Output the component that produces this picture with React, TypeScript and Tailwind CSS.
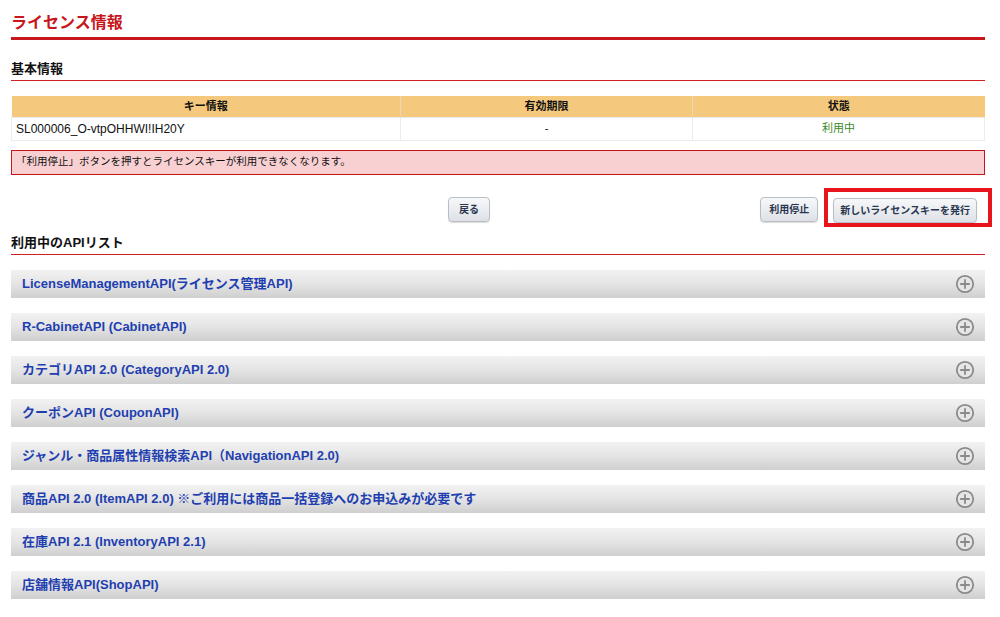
const apis = [
  'LicenseManagementAPI(ライセンス管理API)',
  'R-CabinetAPI (CabinetAPI)',
  'カテゴリAPI 2.0 (CategoryAPI 2.0)',
  'クーポンAPI (CouponAPI)',
  'ジャンル・商品属性情報検索API（NavigationAPI 2.0)',
  '商品API 2.0 (ItemAPI 2.0) ※ご利用には商品一括登録へのお申込みが必要です',
  '在庫API 2.1 (InventoryAPI 2.1)',
  '店舗情報API(ShopAPI)',
]

const PlusCircle = () => (
  <svg width="20" height="20" viewBox="0 0 20 20" fill="none">
    <circle cx="10" cy="10" r="8.2" stroke="#8a8a8a" strokeWidth="1.8" fill="#e6e6e6" />
    <path d="M10 5.2v9.6M5.2 10h9.6" stroke="#8a8a8a" strokeWidth="1.8" />
  </svg>
)

const Btn = ({ children, px = 'px-[10px]' }: { children: React.ReactNode; px?: string }) => (
  <button
    className={`h-[25px] rounded-[4px] border border-[#b9bec6] bg-gradient-to-b from-[#f7f8fa] to-[#dde1e6] ${px} text-[10px] font-bold text-[#2a3550] shadow-[0_1px_1px_rgba(0,0,0,0.15)]`}
  >
    {children}
  </button>
)

export default function App() {
  return (
    <div
      className="min-h-[617px] w-full bg-white pl-[11px] pr-[15px] text-[#111]"
      style={{ fontFamily: '"Liberation Sans", "Noto Sans CJK JP", sans-serif' }}
    >
      <h1 className="border-b-[3px] border-[#c8161d] pt-[12px] pb-[3px] text-[16px] leading-[22px] font-bold text-[#c8161d]">
        ライセンス情報
      </h1>

      <h2 className="mt-[19px] border-b border-[#d02020] pb-[1px] text-[13px] leading-[20px] font-bold">基本情報</h2>

      <table className="mt-[15px] w-full border-collapse text-[11px]">
        <thead>
          <tr className="h-[21px] bg-[#f5c97d]">
            <th className="w-[389px] border-r border-[#ead8b0] font-bold">キー情報</th>
            <th className="w-[292px] border-r border-[#ead8b0] font-bold">有効期限</th>
            <th className="font-bold">状態</th>
          </tr>
        </thead>
        <tbody>
          <tr className="h-[23px] border border-[#ececec]">
            <td className="border-r border-[#ececec] pl-[4px] text-[12px]">SL000006_O-vtpOHHWI!IH20Y</td>
            <td className="border-r border-[#ececec] text-center">-</td>
            <td className="text-center text-[#3a8a2a]">利用中</td>
          </tr>
        </tbody>
      </table>

      <div className="mt-[9px] flex h-[25px] items-center border border-[#c0161c] bg-[#f8d0d2] px-[4px] text-[10.5px]">
        「利用停止」ボタンを押すとライセンスキーが利用できなくなります。
      </div>

      <div className="mt-[22px] flex items-center">
        <div className="w-[437px]" />
        <Btn>戻る</Btn>
        <div className="flex-1" />
        <Btn px="px-[8px]">利用停止</Btn>
        <div className="relative ml-[15px] mr-[8px]">
          <Btn px="px-[6px]">新しいライセンスキーを発行</Btn>
          <div className="pointer-events-none absolute top-[-9px] right-[-15px] bottom-[-4px] left-[-9px] border-[4px] border-[#e8141c]" />
        </div>
      </div>

      <h2 className="mt-[10px] border-b border-[#d02020] pb-[1px] text-[13px] leading-[20px] font-bold">利用中のAPIリスト</h2>

      <div className="mt-[15px] flex flex-col gap-[15px]">
        {apis.map((a) => (
          <div
            key={a}
            className="flex h-[28px] items-center justify-between bg-gradient-to-b from-[#f2f2f2] via-[#e4e4e4] to-[#cfcfcf] pr-[10px] pl-[11px]"
          >
            <span className="text-[13px] font-bold text-[#1f3fb0]">{a}</span>
            <PlusCircle />
          </div>
        ))}
      </div>
    </div>
  )
}
